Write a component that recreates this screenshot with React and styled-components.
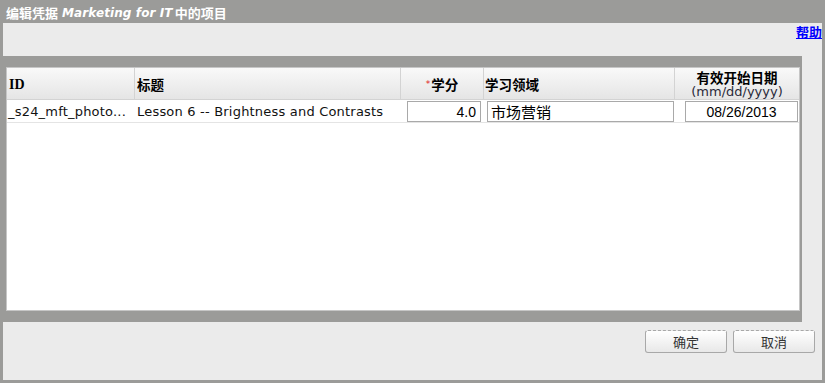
import React from "react";
import styled, { createGlobalStyle } from "styled-components";

const GlobalStyle = createGlobalStyle`
  html, body { margin: 0; padding: 0; background: #9b9b99; }
  body { font-family: "DejaVu Sans", "Noto Sans CJK SC", sans-serif; }
  * { box-sizing: border-box; }
`;

const Window = styled.div`
  width: 825px;
  height: 383px;
  display: flex;
  flex-direction: column;
  background: #9b9b99;
`;

const TitleBar = styled.div`
  height: 23px;
  display: flex;
  align-items: center;
  padding: 2px 0 0 6px;
  color: #ffffff;
  font-weight: bold;
  font-size: 13px;
  font-family: "Noto Sans CJK SC", sans-serif;
  white-space: pre;
`;

const TitleItalic = styled.span`
  font-family: "DejaVu Sans", sans-serif;
  font-style: italic;
  font-weight: bold;
  font-size: 12px;
  letter-spacing: 0.1px;
  margin: 0 2px 0 4px;
`;

const Panel = styled.div`
  flex: 1;
  margin: 0 3px 3px 3px;
  background: #ebebeb;
  display: flex;
  flex-direction: column;
`;

const HelpRow = styled.div`
  height: 33px;
  display: flex;
  justify-content: flex-end;
  align-items: flex-start;
  padding-top: 1px;
`;

const HelpLink = styled.a`
  color: #0000ff;
  font-weight: bold;
  font-size: 13px;
  font-family: "Noto Sans CJK SC", sans-serif;
  text-decoration: underline;
  line-height: 16px;
  cursor: pointer;
`;

const Band = styled.div`
  width: 799px;
  height: 266px;
  background: #9b9b99;
  padding: 11px 2px 11px 3px;
`;

const TableBox = styled.div`
  height: 244px;
  background: #ffffff;
  border: 1px solid #c6c6c6;
  overflow: hidden;
`;

const Row = styled.div`
  display: grid;
  grid-template-columns: 127px 266px 83px 191px 125px;
`;

const HeadCell = styled.div`
  height: 32px;
  display: flex;
  flex-direction: column;
  justify-content: center;
  align-items: ${(p) => (p.$center ? "center" : "flex-start")};
  padding-left: ${(p) => (p.$center ? 0 : p.$pad || 2)}px;
  padding-top: 1px;
  background: linear-gradient(#f9f9f9, #e5e5e5);
  border-bottom: 1px solid #d3d3d3;
  border-left: ${(p) => (p.$first ? "none" : "1px solid #d3d3d3")};
  font-family: ${(p) => (p.$serif ? '"Liberation Serif", serif' : '"Noto Sans CJK SC", sans-serif')};
  font-weight: bold;
  font-size: ${(p) => (p.$serif ? 14 : 13.5)}px;
  color: #000;
  line-height: 15px;
`;

const HeadLine = styled.span`
  display: block;
  height: 15px;
  line-height: 15px;
`;

const Required = styled.span`
  color: #e02020;
  font-size: 9px;
  font-family: "DejaVu Sans", sans-serif;
  font-weight: normal;
  vertical-align: 3px;
  margin-right: 1px;
`;

const FormatHint = styled.span`
  display: block;
  height: 14px;
  line-height: 14px;
  font-family: "DejaVu Sans", sans-serif;
  font-weight: normal;
  font-size: 13px;
  color: #2a2a3a;
`;

const DataCell = styled.div`
  height: 23px;
  display: flex;
  align-items: ${(p) => (p.$input ? "flex-start" : "center")};
  padding-top: ${(p) => (p.$input ? 1 : 0)}px;
  padding-left: ${(p) => p.$pad || 0}px;
  border-bottom: 1px solid #e4e4e4;
  font-family: "DejaVu Sans", sans-serif;
  font-size: 13px;
  letter-spacing: 0.2px;
  color: #111;
  white-space: nowrap;
  overflow: visible;
`;

const Field = styled.input`
  display: block;
  height: 21px;
  width: ${(p) => p.$w}px;
  margin: 0;
  border: 1px solid #a9a9a9;
  background: #fff;
  color: #000;
  padding: 0 ${(p) => (p.$align === "right" ? 4 : 0)}px 0 ${(p) => (p.$align === "left" ? 3 : 0)}px;
  text-align: ${(p) => p.$align};
  font-family: ${(p) => (p.$cjk ? '"Noto Sans CJK SC", sans-serif' : '"Liberation Sans", sans-serif')};
  font-size: ${(p) => (p.$cjk ? 15 : 14)}px;
  outline: none;
`;

const ButtonRow = styled.div`
  display: flex;
  justify-content: flex-end;
  gap: 6px;
  padding: 8px 7px 0 0;
`;

const Button = styled.button`
  width: 82px;
  height: 23px;
  border: 1px solid #a8a8a8;
  border-top: 1px dashed #a8a8a8;
  border-radius: 3px;
  background: linear-gradient(#ffffff, #e8e8e8);
  font-family: "Noto Sans CJK SC", sans-serif;
  font-size: 13px;
  color: #333;
  padding: 0;
  cursor: pointer;
`;

export default function App() {
  return (
    <>
      <GlobalStyle />
      <Window>
        <TitleBar>
          编辑凭据<TitleItalic>Marketing for IT</TitleItalic>中的项目
        </TitleBar>
        <Panel>
          <HelpRow>
            <HelpLink>帮助</HelpLink>
          </HelpRow>
          <Band>
            <TableBox>
              <Row>
                <HeadCell $first $serif $pad={2}>ID</HeadCell>
                <HeadCell $pad={2}>标题</HeadCell>
                <HeadCell $center>
                  <span>
                    <Required>*</Required>学分
                  </span>
                </HeadCell>
                <HeadCell $pad={1}>学习领域</HeadCell>
                <HeadCell $center>
                  <HeadLine>有效开始日期</HeadLine>
                  <FormatHint>(mm/dd/yyyy)</FormatHint>
                </HeadCell>
              </Row>
              <Row>
                <DataCell $pad={1}>_s24_mft_photo...</DataCell>
                <DataCell $pad={3}>Lesson 6 -- Brightness and Contrasts</DataCell>
                <DataCell $input $pad={7}>
                  <Field $w={74} $align="right" defaultValue="4.0" />
                </DataCell>
                <DataCell $input $pad={4}>
                  <Field $w={189} $align="left" $cjk defaultValue="市场营销" />
                </DataCell>
                <DataCell $input $pad={11}>
                  <Field $w={113} $align="center" defaultValue="08/26/2013" />
                </DataCell>
              </Row>
            </TableBox>
          </Band>
          <ButtonRow>
            <Button>确定</Button>
            <Button>取消</Button>
          </ButtonRow>
        </Panel>
      </Window>
    </>
  );
}
